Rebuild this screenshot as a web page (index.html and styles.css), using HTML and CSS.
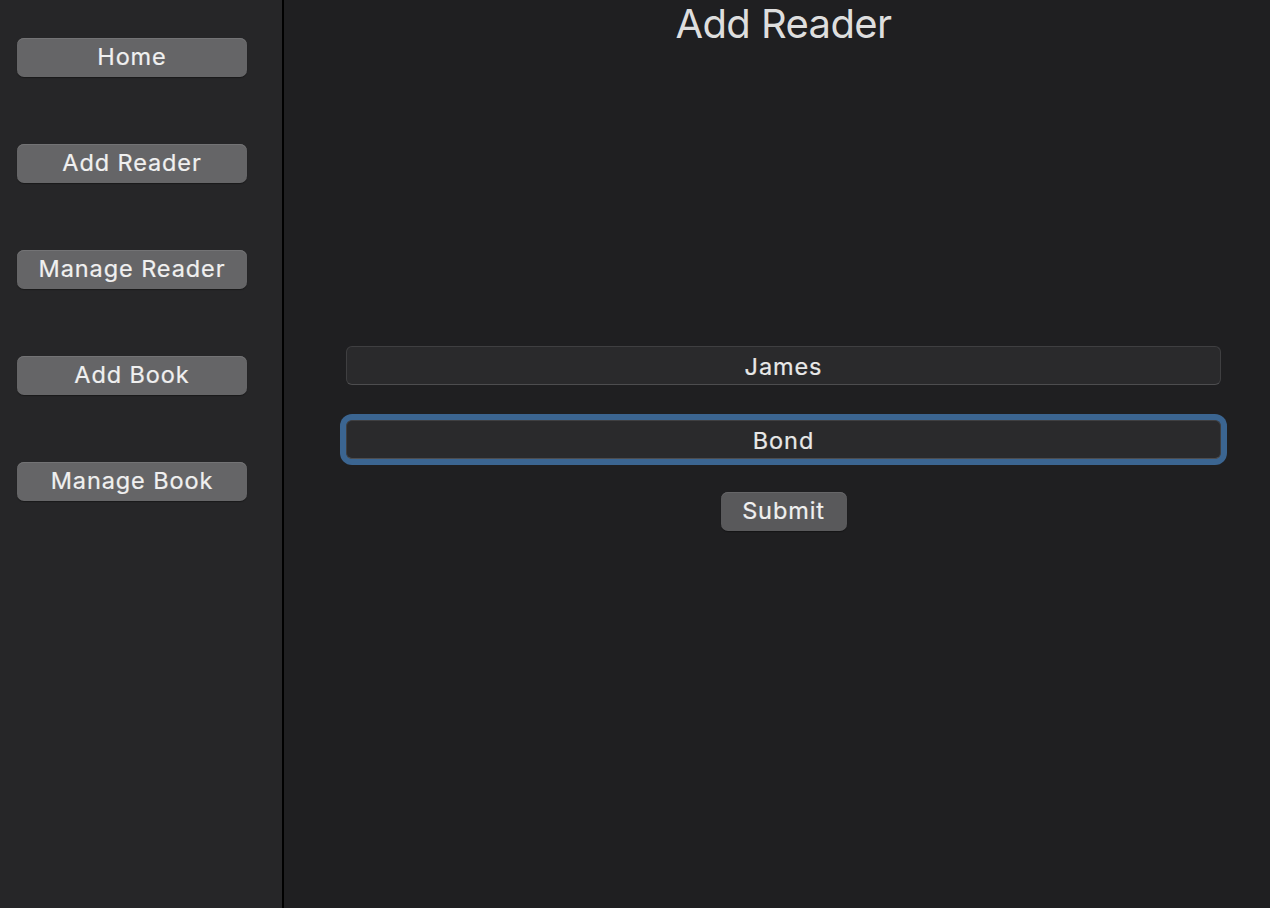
FILE: index.html
```html
<!DOCTYPE html>
<html>
<head>
<meta charset="utf-8">
<title>Add Reader</title>
<link rel="stylesheet" href="styles.css">
</head>
<body>
<div class="app">
  <nav class="sidebar">
    <button class="nav-btn">Home</button>
    <button class="nav-btn">Add Reader</button>
    <button class="nav-btn">Manage Reader</button>
    <button class="nav-btn">Add Book</button>
    <button class="nav-btn">Manage Book</button>
  </nav>
  <main class="main">
    <h1 class="title">Add Reader</h1>
    <form class="form">
      <input class="field" type="text" value="James">
      <input class="field field-focus" type="text" value="Bond">
      <button type="button" class="submit">Submit</button>
    </form>
  </main>
</div>
</body>
</html>
```

FILE: styles.css
```css
* { box-sizing: border-box; }
html, body {
  margin: 0;
  height: 100%;
  background: #1f1f21;
  font-family: Inter, "Liberation Sans", sans-serif;
}
.app {
  display: flex;
  height: 908px;
}
.sidebar {
  width: 284px;
  flex: none;
  background: #262628;
  border-right: 2px solid #000;
  display: flex;
  flex-direction: column;
  gap: 67px;
  padding: 38px 0 0 17px;
}
.nav-btn {
  width: 230px;
  height: 39px;
  border: none;
  border-radius: 7px;
  background: #656567;
  box-shadow: inset 0 1px 0 #737375, 0 1px 1px rgba(0,0,0,0.35);
  color: #f0f0f0;
  font-family: Inter, "Liberation Sans", sans-serif;
  font-size: 23.5px;
  font-weight: 400;
  letter-spacing: 0.9px;
  padding: 0 0 2px;
  line-height: 36px;
  -webkit-text-stroke: 0.2px #f0f0f0;
}
.main {
  flex: 1;
  display: flex;
  flex-direction: column;
  padding: 0 49px 0 62px;
}
.title {
  margin: 0;
  height: 48px;
  text-align: center;
  font-weight: 400;
  font-size: 40px;
  line-height: 48px;
  color: #dedede;
  letter-spacing: -0.6px;
}
.form {
  margin-top: 298px;
  display: flex;
  flex-direction: column;
  align-items: center;
}
.field {
  width: 100%;
  height: 39px;
  background: #2a2a2c;
  border: 1px solid #3f3f41;
  border-bottom-color: #4d4d4f;
  border-radius: 6px;
  color: #e8e8e8;
  font-family: Inter, "Liberation Sans", sans-serif;
  font-size: 23.5px;
  font-weight: 400;
  letter-spacing: 0.9px;
  text-align: center;
  outline: none;
  padding: 1px 0 0;
  -webkit-text-stroke: 0.2px #e8e8e8;
}
.field-focus {
  margin-top: 35px;
  box-shadow: 0 0 0 6px #3b6591;
}
.submit {
  margin-top: 33px;
  width: 126px;
  height: 39px;
  border: none;
  border-radius: 7px;
  background: #59595b;
  box-shadow: inset 0 1px 0 #666668, 0 1px 1px rgba(0,0,0,0.35);
  color: #f0f0f0;
  font-family: Inter, "Liberation Sans", sans-serif;
  font-size: 23.5px;
  font-weight: 400;
  letter-spacing: 0.9px;
  padding: 0 0 2px;
  -webkit-text-stroke: 0.2px #f0f0f0;
}
```
